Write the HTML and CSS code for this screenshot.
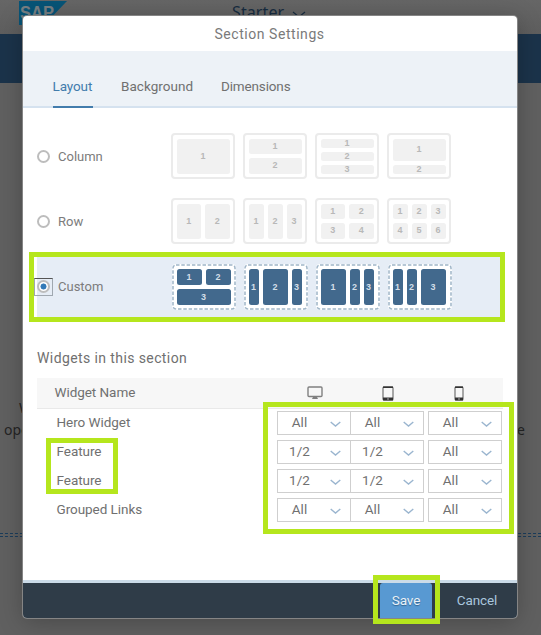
FILE: index.html
```html
<!DOCTYPE html>
<html lang="en">
<head>
<meta charset="utf-8">
<title>Section Settings</title>
<link rel="stylesheet" href="styles.css">
</head>
<body>
<div class="page">
  <header class="shell">
    <svg class="logo" width="50" height="26" viewBox="0 0 50 26"><path d="M0 1H48L25 25H0Z" fill="#075477"/><text class="logo-text" x="1" y="18.500" textLength="34" lengthAdjust="spacingAndGlyphs">SAP</text></svg>
    <div class="site">Starter<svg width="14" height="8" viewBox="0 0 14 8"><path d="M1 1l6 5 6-5" fill="none" stroke="#172c40" stroke-width="1.2"/></svg></div>
  </header>
  <div class="band"></div>
  <main class="content">
    <p class="copy first">W</p>
    <p class="copy second"><span>ope</span><span>e</span></p>
    <div class="drop-line"></div>
  </main>
</div>

<section class="modal">
  <h1>Section Settings</h1>
  <nav><a class="active">Layout</a><a class="t2">Background</a><a class="t3">Dimensions</a></nav>
  <div class="options">
    <div class="option"><i class="radio"></i><span class="label">Column</span>
      <div class="tiles">
        <div class="tile"><b>1</b></div>
        <div class="tile rows"><b>1</b><b>2</b></div>
        <div class="tile rows"><b>1</b><b>2</b><b>3</b></div>
        <div class="tile big-small"><b>1</b><b>2</b></div>
      </div>
    </div>
    <div class="option"><i class="radio"></i><span class="label">Row</span>
      <div class="tiles">
        <div class="tile c2"><b>1</b><b>2</b></div>
        <div class="tile c3"><b>1</b><b>2</b><b>3</b></div>
        <div class="tile c2 two"><b>1</b><b>2</b><b>3</b><b>4</b></div>
        <div class="tile c3 two"><b>1</b><b>2</b><b>3</b><b>4</b><b>5</b><b>6</b></div>
      </div>
    </div>
    <div class="option chosen"><span class="focus"><i class="radio"></i></span><span class="label">Custom</span>
      <div class="tiles">
        <div class="tile c2 two"><svg class="dashes" viewBox="0 0 64 46"><rect x="1" y="1" width="62" height="44" rx="3"/></svg><b>1</b><b>2</b><b class="wide">3</b></div>
        <div class="tile mid"><svg class="dashes" viewBox="0 0 64 46"><rect x="1" y="1" width="62" height="44" rx="3"/></svg><b>1</b><b>2</b><b>3</b></div>
        <div class="tile left"><svg class="dashes" viewBox="0 0 64 46"><rect x="1" y="1" width="62" height="44" rx="3"/></svg><b>1</b><b>2</b><b>3</b></div>
        <div class="tile right"><svg class="dashes" viewBox="0 0 64 46"><rect x="1" y="1" width="62" height="44" rx="3"/></svg><b>1</b><b>2</b><b>3</b></div>
      </div>
      <div class="mark mark-custom"></div>
    </div>
  </div>

  <h2>Widgets in this section</h2>
  <div class="widgets">
    <div class="line head"><span class="name">Widget Name</span>
      <span class="device"><svg width="16" height="14" viewBox="0 0 16 14"><rect x="1" y="1" width="14" height="9.5" rx="1" fill="none" stroke="#808080" stroke-width="1.4"/><path d="M6 11h4l1 2H5z" fill="#808080"/></svg></span>
      <span class="device"><svg width="12" height="15" viewBox="0 0 12 15"><rect x="1" y="1" width="10" height="13" rx="1" fill="none" stroke="#666" stroke-width="1.1"/><path d="M1 1.2h10" stroke="#333" stroke-width="1.6"/><path d="M1 11.5h10v3H1z" fill="#333"/><circle cx="6" cy="13" r=".7" fill="#ddd"/></svg></span>
      <span class="device phone"><svg width="10" height="15" viewBox="0 0 10 15"><rect x="1" y="1" width="8" height="13" rx="1" fill="none" stroke="#666" stroke-width="1.1"/><path d="M1 1.2h8" stroke="#333" stroke-width="1.6"/><path d="M1 11.5h8v3H1z" fill="#333"/><circle cx="5" cy="13" r=".7" fill="#ddd"/></svg></span>
    </div>
    <div class="line"><span class="name">Hero Widget</span><div class="select">All<svg viewBox="0 0 11 7"><path d="M.7 1l4.8 4L10.300 1"/></svg></div><div class="select">All<svg viewBox="0 0 11 7"><path d="M.7 1l4.8 4L10.300 1"/></svg></div><div class="select phone">All<svg viewBox="0 0 11 7"><path d="M.7 1l4.8 4L10.300 1"/></svg></div></div>
    <div class="line"><span class="name">Feature</span><div class="select">1/2<svg viewBox="0 0 11 7"><path d="M.7 1l4.8 4L10.300 1"/></svg></div><div class="select">1/2<svg viewBox="0 0 11 7"><path d="M.7 1l4.8 4L10.300 1"/></svg></div><div class="select phone">All<svg viewBox="0 0 11 7"><path d="M.7 1l4.8 4L10.300 1"/></svg></div></div>
    <div class="line"><span class="name">Feature</span><div class="select">1/2<svg viewBox="0 0 11 7"><path d="M.7 1l4.8 4L10.300 1"/></svg></div><div class="select">1/2<svg viewBox="0 0 11 7"><path d="M.7 1l4.8 4L10.300 1"/></svg></div><div class="select phone">All<svg viewBox="0 0 11 7"><path d="M.7 1l4.8 4L10.300 1"/></svg></div></div>
    <div class="line"><span class="name">Grouped Links</span><div class="select">All<svg viewBox="0 0 11 7"><path d="M.7 1l4.8 4L10.300 1"/></svg></div><div class="select">All<svg viewBox="0 0 11 7"><path d="M.7 1l4.8 4L10.300 1"/></svg></div><div class="select phone">All<svg viewBox="0 0 11 7"><path d="M.7 1l4.8 4L10.300 1"/></svg></div></div>
    <div class="mark mark-names"></div>
    <div class="mark mark-sizes"></div>
  </div>
  <footer><button class="save">Save</button><button class="cancel">Cancel</button><div class="mark mark-save"></div></footer>
</section>
</body>
</html>
```
FILE: styles.css
```css
* { box-sizing: border-box; }
body { margin: 0; width: 541px; height: 635px; overflow: hidden; position: relative; font-family: Roboto, "Liberation Sans", sans-serif; font-size: 13.5px; color: #707070; }
h1, h2, p { margin: 0; font-weight: 400; }
.page { height: 635px; background: #606060; }
.shell { height: 34px; position: relative; background: linear-gradient(#666, #5e5e5e); }
.logo { display: block; margin-left: 19px; }
.logo-text { font: bold 19px "Liberation Sans", sans-serif; fill: #777f83; }
.site { position: absolute; left: 232px; top: 2px; display: flex; align-items: center; gap: 8px; font: 16px/20px "Noto Sans", sans-serif; letter-spacing: .1px; color: #172c40; }
.site svg { margin-top: 5px; }
.band { height: 49px; background: #1b334a; }
.content { padding-top: 314px; }
.copy { font: 14px/22px "Noto Sans", sans-serif; color: #242424; height: 22px; }
.first { padding-left: 19px; }
.second { padding: 0 16px 0 4px; display: flex; justify-content: space-between; }
.drop-line { margin-top: 92px; height: 4px; border-top: 1px dashed #1b3c5a; border-bottom: 1px dashed #1b3c5a; }

.modal { position: absolute; left: 23px; top: 16px; width: 494px; height: 602px; background: #fff; border-radius: 4px; box-shadow: 0 0 0 1px #858585, 0 4px 24px rgba(0,0,0,.25); display: flex; flex-direction: column; }
h1 { height: 35px; line-height: 37px; text-align: center; font-size: 14px; letter-spacing: .55px; color: #7a7a7a; padding-right: 1px; }
nav { height: 57px; padding-left: 29.5px; background: #edf2f7; border-bottom: 2px solid #d5e2ef; display: flex; flex: none; }
nav a { width: 40px; height: 57px; line-height: 70px; white-space: nowrap; }
nav .active { color: #427cac; border-bottom: 2px solid #427cac; letter-spacing: -.1px; }
nav .t2 { margin-left: 28.5px; width: 72px; letter-spacing: .05px; }
nav .t3 { margin-left: 28px; letter-spacing: -.15px; }

.options { padding: 16px 14px 0; }
.option { height: 65px; display: flex; align-items: center; position: relative; }
.chosen { background: #e6edf6; }
.radio { flex: none; width: 13px; height: 13px; margin-right: 1px; border: 2px solid #bdbdbd; border-radius: 50%; background: #fff; }
.chosen .radio { margin: 0; background: radial-gradient(circle, #337ab7 0 2.7px, #fff 3.3px); }
.focus { width: 19px; height: 18px; margin: 0 -2px 0 -3px; border: 1px solid #a0a8b0; border-top-color: #555; display: flex; align-items: center; justify-content: center; }
.label { width: 113px; margin-left: 7px; font-size: 13px; letter-spacing: 0; color: #7c7c7c; }
.tiles { display: flex; gap: 8px; margin-top: -1px; }
.tile { width: 64px; height: 46px; border: 2px solid #ebebeb; border-radius: 4px; padding: 3.5px; display: grid; gap: 4px; background: #fff; position: relative; }
.tile b { background: #f1f1f1; border-radius: 2.5px; font: bold 9px/1 "Liberation Sans", sans-serif; color: #b8b8b8; display: flex; align-items: center; justify-content: center; min-width: 0; min-height: 0; }
.rows { grid-auto-rows: 1fr; }
.big-small { grid-template-rows: 22px 9px; }
.c2 { grid-template-columns: 1fr 1fr; }
.c3 { grid-template-columns: repeat(3, 1fr); }
.two { grid-template-rows: 1fr 1fr; }
.wide { grid-column: span 2; }
.mid { grid-template-columns: 10px 25px 10px; }
.left { grid-template-columns: 25px 10px 10px; }
.right { grid-template-columns: 10px 10px 25px; }
.chosen .tiles { margin: 1px 0 0 .5px; }
.chosen .tile { border: 0; padding: 5px; }
.chosen .tile b { background: #42698d; color: #d3dee8; }
.dashes { position: absolute; left: 0; top: 0; width: 64px; height: 46px; }
.dashes rect { fill: none; stroke: #9fb5c8; stroke-width: 1.5; stroke-dasharray: 3.500 1.800; }

h2 { font-size: 14px; line-height: 20px; letter-spacing: .4px; padding: 29px 0 0 14px; color: #707070; }
.widgets { margin: 10px 14px 0 13.5px; position: relative; }
.line { height: 29px; display: flex; align-items: center; }
.name { width: 240px; padding-left: 20px; letter-spacing: -.05px; margin-top: -2px; }
.head { height: 31px; background: #f7f7f7; border-bottom: 1px solid #e9e9e9; margin-bottom: -1px; }
.head .name { padding-left: 18px; }
.device { width: 73px; height: 15px; display: flex; justify-content: center; padding-left: 3px; }
.device.phone { width: 70px; }
.select { width: 74px; height: 24px; margin: 1px -1px 0 0; border: 1px solid #cfcfcf; padding-right: 28px; line-height: 20px; text-align: center; letter-spacing: .1px; background: #fff; position: relative; color: #707070; }
.select.phone { margin-left: 5px; }
.select svg { position: absolute; right: 9px; top: 9px; width: 11px; height: 7px; fill: none; stroke: #9ab5cf; stroke-width: 1.4; }

footer { position: relative; margin-top: auto; height: 38px; border-top: 3px solid #cbdbe8; background: #2f3c48; border-radius: 0 0 4px 4px; display: flex; justify-content: flex-end; align-items: stretch; padding-right: 18px; }
button { border: 0; padding: 0 0 2px; background: none; font: 13.5px Roboto, sans-serif; letter-spacing: -.1px; color: #a9c6de; }
.save { width: 52px; background: #5899d2; color: #e9f1f8; border-radius: 3px 3px 0 0; text-shadow: 0 1px 1px #336793; }
.cancel { width: 44px; margin-left: 23px; white-space: nowrap; }
.mark { position: absolute; border: 5px solid #b5e61d; pointer-events: none; }
.mark-custom { left: -8px; top: -2px; width: 476px; height: 70px; }
.mark-names { left: 9.5px; top: 60px; width: 72px; height: 56px; }
.mark-sizes { left: 226.5px; top: 24px; width: 251px; height: 132px; }
.mark-save { left: 350px; top: -8px; width: 67px; height: 49px; }
```
